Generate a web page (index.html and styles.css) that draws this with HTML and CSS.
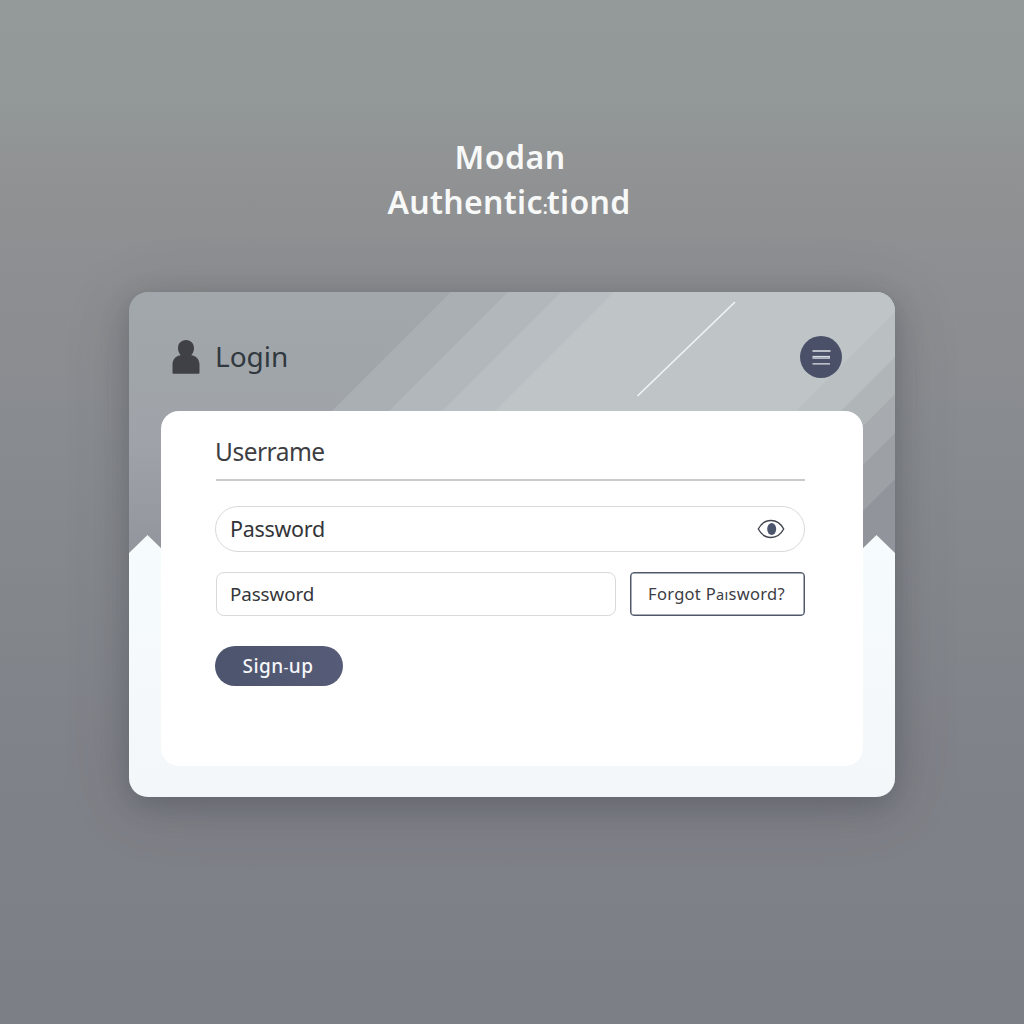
FILE: index.html
```html
<!DOCTYPE html>
<html lang="en">
<head>
<meta charset="utf-8">
<title>Login</title>
<link rel="stylesheet" href="styles.css">
</head>
<body>
<h1 class="title"><span class="title-top">Modan</span><span class="title-bottom">Authentic<span class="mark">:</span>tiond</span></h1>
<main class="card">
  <svg class="backdrop" viewBox="129 292 766 505" aria-hidden="true">
    <defs>
      <linearGradient id="base" x1="0" y1="0" x2="0" y2="1">
        <stop offset="0" stop-color="#a1a7aa"/><stop offset=".3" stop-color="#9fa3a9"/><stop offset=".52" stop-color="#92959b"/>
      </linearGradient>
      <linearGradient id="snow" x1="0" y1="0" x2="0" y2="1">
        <stop offset="0" stop-color="#f6fbfd"/><stop offset="1" stop-color="#f3f7fa"/>
      </linearGradient>
    </defs>
    <path fill="url(#base)" d="M129 292h766v505H129z"/>
    <path fill="#a9afb2" d="M451 292H895V420H323z"/>
    <path fill="#b1b7ba" d="M508 292H895V420H380z"/>
    <path fill="#b8bec1" d="M561 292H895V420H433z"/>
    <path fill="#bfc5c7" d="M614 292H895V420H486z"/>
    <path fill="#bac0c2" d="M895 312V797H410z"/>
    <path fill="#b0b5b8" d="M895 357V797H455z"/>
    <path fill="#a7abaf" d="M895 394V797H492z"/>
    <path fill="#9da1a6" d="M895 433V797H531z"/>
    <path fill="#91959b" d="M895 479V797H577z"/>
    <path fill="url(#snow)" d="M129 553L147.500 535L166 553H858L876.500 535L895 553V797H129z"/>
    <path stroke="#eff3f3" stroke-width="1.700" d="M637.500 396L735 302"/>
  </svg>
  <header class="bar">
    <svg class="user" viewBox="0 0 28 34"><path fill="#404146" d="M14 0c5 0 8 3.600 8 8.300 0 2.700-1 5.200-2.800 6.900 5 .6 8.300 4.200 8.300 9.200v8c0 .9-.5 1.400-1.300 1.400H1.800c-.8 0-1.300-.5-1.300-1.400v-8c0-5 3.300-8.600 8.300-9.200C7 13.500 6 11 6 8.300 6 3.600 9 0 14 0z"/></svg>
    <h2 class="heading">Login</h2>
    <button class="menu" aria-label="Menu"><svg viewBox="0 0 42 42"><g stroke="#dfe2e8" fill="none"><path stroke-width="1.300" d="M12.500 15H30.500M12.500 27.800H30"/><path stroke-width="2.800" d="M12.500 21.300H30"/></g><path stroke="#8f95a6" stroke-width=".8" d="M13 21.400H29.500"/></svg></button>
  </header>
  <form class="panel">
    <label class="username">Userrame</label>
    <div class="pill"><span class="pw-large">Password</span><svg class="eye" viewBox="0 0 28 20"><path fill="#fff" stroke="#42464e" stroke-width="1.400" d="M1.300 10C4.200 4.500 8.500 1.500 14 1.500S23.800 4.500 26.700 10C23.800 15.500 19.500 18.500 14 18.500S4.200 15.500 1.300 10z"/><ellipse cx="14.700" cy="10" rx="4.500" ry="6" fill="#4b566c"/></svg></div>
    <div class="row">
      <div class="field"><span class="pw-small">Password</span></div>
      <button type="button" class="forgot"><span class="f-light">Forgot</span> P<span class="f-small">aı</span>sword?</button>
    </div>
    <button type="button" class="signup">Sign<span class="dash">-</span>up</button>
  </form>
</main>
</body>
</html>
```
FILE: styles.css
```css
* { box-sizing: border-box; }
body {
  margin: 0;
  height: 1024px;
  overflow: hidden;
  display: flex;
  flex-direction: column;
  align-items: center;
  font-family: "Noto Sans", "Open Sans", sans-serif;
  background: linear-gradient(#949a99 0, #929797 110px, #909192 190px, #8b8d91 330px, #868a8e 500px, #7f8288 750px, #7c7f85 1024px);
}
button { font: inherit; padding: 0; }
.title {
  margin: 134px 0 0;
  height: 158px;
  display: flex;
  flex-direction: column;
  align-items: center;
  font-size: 32px;
  font-weight: 600;
  line-height: 45px;
  color: #f7f8f8;
  white-space: nowrap;
}
.title-top { margin-right: 4px; letter-spacing: .5px; }
.title-bottom { margin-right: 6px; letter-spacing: .3px; }
.mark { font-size: 18px; letter-spacing: -1px; }
.card {
  position: relative;
  width: 766px;
  height: 505px;
  flex: none;
  border-radius: 19px;
  padding: 0 32px;
  box-shadow: 0 8px 28px rgba(50, 53, 60, .28), 0 8px 64px rgba(60, 63, 72, .18);
}
.backdrop {
  position: absolute;
  inset: 0;
  width: 100%;
  height: 100%;
  border-radius: 19px;
}
.bar {
  position: relative;
  height: 119px;
  display: flex;
  align-items: center;
  padding: 11px 21px 0 11px;
}
.user { width: 28px; height: 34px; }
.heading {
  margin: -2px auto 0 15px;
  font-size: 28px;
  font-weight: 400;
  line-height: 40px;
  color: #303840;
}
.menu {
  width: 42px;
  height: 42px;
  border: 0;
  border-radius: 50%;
  background: #4a5067;
}
.menu svg { display: block; }
.panel {
  position: relative;
  height: 355px;
  border-radius: 18px;
  background: #fff;
  padding: 24px 58px 0 54px;
}
.username {
  display: block;
  height: 46px;
  margin-left: 1px;
  border-bottom: 2px solid #c9cacd;
  font-size: 24.500px;
  letter-spacing: -.5px;
  line-height: 34px;
  text-indent: -1px;
  color: #3e3e42;
}
.pill {
  height: 46px;
  margin-top: 25px;
  border: 1px solid #d8d9db;
  border-radius: 23px;
  display: flex;
  align-items: center;
  justify-content: space-between;
  padding: 0 19px 0 14px;
  color: #333438;
}
.pw-large { font-size: 21.500px; letter-spacing: -.3px; margin-top: -2px; }
.pw-small { font-size: 18.800px; letter-spacing: -.1px; }
.eye { width: 28px; height: 20px; }
.row { display: flex; gap: 14px; margin: 20px 0 0 1px; }
.field {
  width: 400px;
  height: 44px;
  border: 1px solid #d8d9db;
  border-radius: 8px;
  display: flex;
  align-items: center;
  padding-left: 13px;
  color: #35363a;
}
.forgot {
  flex: 1;
  height: 44px;
  border: 1px solid #505869;
  box-shadow: inset 0 0 0 .5px #505869;
  border-radius: 4px;
  background: #fff;
  font-size: 16.500px;
  letter-spacing: .3px;
  padding: 0 2px 2px 0;
  color: #3c3d43;
}
.f-small { font-size: 14.500px; }
.signup {
  display: block;
  width: 128px;
  height: 40px;
  margin-top: 30px;
  border: 0;
  border-radius: 20px;
  background: linear-gradient(90deg, #4d546d, #565c77);
  color: #f5f6f9;
  font-size: 19px;
  font-weight: 500;
  letter-spacing: .5px;
  padding: 0 2px 1px 0;
}
.dash { font-size: 14px; }
```
